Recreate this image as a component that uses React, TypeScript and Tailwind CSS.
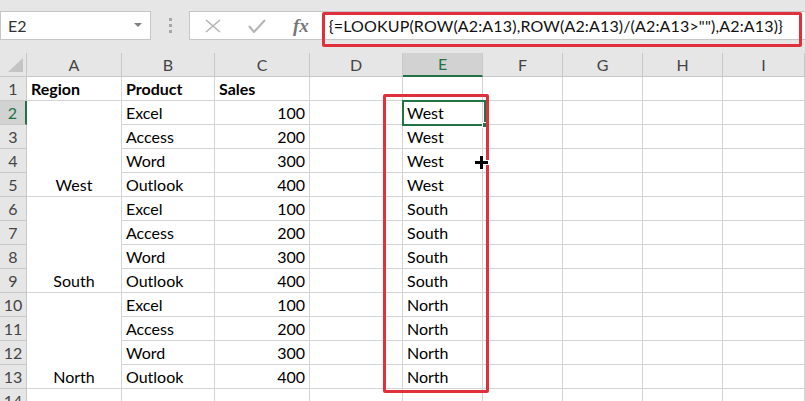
import React from "react";

const cols = ["A", "B", "C", "D", "E", "F", "G", "H", "I"];

const rows = [
  { product: "Excel", sales: 100, e: "West" },
  { product: "Access", sales: 200, e: "West" },
  { product: "Word", sales: 300, e: "West" },
  { product: "Outlook", sales: 400, e: "West" },
  { product: "Excel", sales: 100, e: "South" },
  { product: "Access", sales: 200, e: "South" },
  { product: "Word", sales: 300, e: "South" },
  { product: "Outlook", sales: 400, e: "South" },
  { product: "Excel", sales: 100, e: "North" },
  { product: "Access", sales: 200, e: "North" },
  { product: "Word", sales: 300, e: "North" },
  { product: "Outlook", sales: 400, e: "North" },
];

const regions = ["West", "South", "North"];

const cell = "border-r border-b border-[#d4d4d4] bg-white flex items-center px-[4px] overflow-hidden whitespace-nowrap";
const hdr = "border-r border-b border-[#c8c8c8] bg-[#e6e6e6] flex items-center justify-center text-[#444]";

const App: React.FC = () => {
  return (
    <div className="w-[805px] h-[401px] overflow-hidden bg-white font-['Lato','Liberation_Sans',sans-serif] text-[16px] text-black">
      {/* Formula bar */}
      <div className="h-[53px] bg-[#e6e6e6] flex items-start pt-[11px]">
        <div className="w-[151px] h-[29px] bg-white border border-[#c6c6c6] flex items-center pl-[7px] pr-[8px] text-[#333]">
          <span className="flex-1">E2</span>
          <svg width="8" height="5" viewBox="0 0 8 5"><path d="M0 0h8L4 4z" fill="#808080" /></svg>
        </div>
        <div className="w-[38px] h-[29px] flex flex-col items-center justify-center gap-[3px]">
          <div className="w-[3px] h-[3px] bg-[#a6a6a6]" />
          <div className="w-[3px] h-[3px] bg-[#a6a6a6]" />
          <div className="w-[3px] h-[3px] bg-[#a6a6a6]" />
        </div>
        <div className="relative flex-1 h-[29px] bg-white border border-[#c6c6c6] border-r-0 flex items-center">
          <svg className="ml-[15px]" width="16" height="14" viewBox="0 0 16 14">
            <path d="M1 1l14 12M15 1L1 13" stroke="#b4b4b4" strokeWidth="1.6" />
          </svg>
          <svg className="ml-[27px]" width="18" height="14" viewBox="0 0 18 14">
            <path d="M1 7l5 6L17 1" stroke="#b4b4b4" strokeWidth="2" fill="none" />
          </svg>
          <span className="ml-[27px] font-['Liberation_Serif',serif] italic font-bold text-[19px] text-[#777] leading-none">fx</span>
          <span className="ml-[20px] text-[16px] tracking-[0.15px] text-[#111]">{'{=LOOKUP(ROW(A2:A13),ROW(A2:A13)/(A2:A13>""),A2:A13)}'}</span>
          <div className="absolute left-[132px] top-0 w-[480px] h-[35px] border-[3px] border-[#e0303c] rounded-[2px]" />
        </div>
      </div>

      {/* Grid */}
      <div className="relative grid grid-cols-[27px_95px_93px_95px_93px_80px_80px_80px_80px_82px] auto-rows-[24px]">
        <div className={hdr + " relative items-end justify-end pb-[4px] pr-[3px]"}>
          <svg width="15" height="14" viewBox="0 0 15 14"><path d="M15 0v14H0z" fill="#c4c4c4" /></svg>
        </div>
        {cols.map((c) => (
          <div
            key={c}
            className={
              c === "E"
                ? "border-r border-b-2 border-r-[#c8c8c8] border-b-[#217346] bg-[#d2d2d2] flex items-center justify-center text-[#217346]"
                : hdr
            }
          >
            {c}
          </div>
        ))}

        {/* row 1 */}
        <div className={hdr}>1</div>
        <div className={cell + " bg-[#00b0f0] font-bold"}>Region</div>
        <div className={cell + " bg-[#00b0f0] font-bold"}>Product</div>
        <div className={cell + " bg-[#00b0f0] font-bold"}>Sales</div>
        {[0, 1, 2, 3, 4, 5].map((i) => (
          <div key={i} className={cell} />
        ))}

        {rows.map((r, i) => {
          const n = i + 2;
          const first = i % 4 === 0;
          return (
            <React.Fragment key={n}>
              <div
                className={
                  n === 2
                    ? "border-r-2 border-b border-r-[#217346] border-b-[#c8c8c8] bg-[#d2d2d2] flex items-center justify-center text-[#217346]"
                    : hdr
                }
              >
                {n}
              </div>
              {first && (
                <div className={cell + " row-span-4 flex-col justify-end"}>
                  <div className="h-[23px] flex items-center">{regions[i / 4]}</div>
                </div>
              )}
              <div className={cell}>{r.product}</div>
              <div className={cell + " justify-end"}>{r.sales}</div>
              <div className={cell} />
              <div className={cell}>{r.e}</div>
              <div className={cell} />
              <div className={cell} />
              <div className={cell} />
              <div className={cell} />
            </React.Fragment>
          );
        })}

        <div className={hdr}>14</div>
        {[0, 1, 2, 3, 4, 5, 6, 7, 8].map((i) => (
          <div key={i} className={cell} />
        ))}

        {/* selected cell E2 */}
        <div className="absolute left-[402px] top-[47px] w-[84px] h-[26px] border-2 border-[#217346] pointer-events-none" />
        <div className="absolute left-[482px] top-[69px] w-[6px] h-[6px] bg-[#217346] border border-white" />

        {/* red annotation around column E */}
        <div className="absolute left-[383px] top-[41px] w-[106px] h-[299px] border-[3px] border-[#e0303c] rounded-[2px]" />

        {/* cursor */}
        <svg className="absolute left-[474px] top-[102px]" width="15" height="15" viewBox="0 0 15 15">
          <path d="M5 0h5v5h5v5h-5v5H5v-5H0V5h5z" fill="white" />
          <path d="M6 1h3v5h5v3H9v5H6V9H1V6h5z" fill="black" />
        </svg>
      </div>
    </div>
  );
};

export default App;
